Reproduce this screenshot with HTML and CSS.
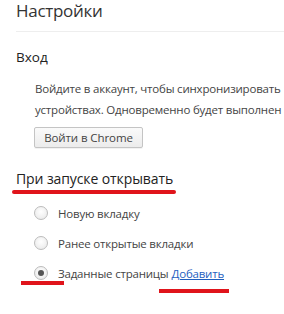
FILE: index.html
```html
<!DOCTYPE html>
<html lang="ru">
<head>
<meta charset="utf-8">
<link rel="stylesheet" href="styles.css">
</head>
<body>
<div class="page">
  <header class="header"><h1 class="title">Настройки</h1></header>
  <section class="section">
    <h3 class="sec-title">Вход</h3>
    <div class="sec-body">
      <p class="desc"><span class="line">Войдите в аккаунт, чтобы синхронизировать</span><span class="line">устройствах. Одновременно будет выполнен автоматический</span></p>
      <button class="btn">Войти в Chrome</button>
    </div>
  </section>
  <section class="section startup">
    <h3 class="sec-title"><span class="mark mark-title">При запуске открывать</span></h3>
    <div class="sec-body radios">
      <label class="radio-row"><span class="radio"></span>Новую вкладку</label>
      <label class="radio-row"><span class="radio"></span>Ранее открытые вкладки</label>
      <label class="radio-row"><span class="radio checked"><span class="mark mark-radio"></span></span>Заданные страницы <a class="link" href="#">Добавить<span class="mark mark-link"></span></a></label>
    </div>
  </section>
</div>
</body>
</html>
```
FILE: styles.css
```css
html, body { margin: 0; padding: 0; background: #fff; }
body { font-family: "Open Sans", "Noto Sans", sans-serif; color: #333; overflow: hidden; }
.page { width: 284px; height: 314px; overflow: hidden; }
.header { margin-left: 16px; border-bottom: 1px solid #eee; height: 31px; }
.title { margin: 0; font-weight: normal; font-size: 17px; line-height: 22px; color: #333; letter-spacing: -0.3px; }
.section { padding-left: 16px; }
.sec-title { margin: 0; font-weight: normal; font-size: 13.5px; line-height: 18px; color: #222; }
.section:first-of-type .sec-title { margin-top: 16px; }
.sec-body { padding-left: 19px; }
.desc { margin: 12px 0 0; font-size: 11.5px; line-height: 21px; color: #444; white-space: nowrap; letter-spacing: -0.2px; }
.line { display: block; }
.btn { display: block; margin-top: 7px; margin-left: -1px; height: 21px; width: 109px; padding: 0; font-family: inherit; font-size: 11.5px; letter-spacing: -0.1px; color: #444; background: linear-gradient(#fafafa, #ececec); border: 1px solid #c4c4c4; border-radius: 2px; box-shadow: 0 1px 0 rgba(0,0,0,0.05); }
.startup { margin-top: 22px; }
.startup .sec-title { font-size: 14px; letter-spacing: -0.1px; }
.mark { position: relative; }
.mark-title::after { content: ""; position: absolute; left: -4px; right: -3px; bottom: -6px; height: 4px; background: #e0141b; border-radius: 2px; }
.radios { margin-top: 10px; padding-left: 18px; }
.radio-row { display: flex; align-items: center; height: 30px; font-size: 11.5px; letter-spacing: -0.2px; color: #444; }
.radio { position: relative; box-sizing: border-box; width: 14px; height: 14px; border-radius: 50%; border: 1px solid #bcbcbc; background: radial-gradient(circle at 50% 40%, #fff, #e6e6e6); margin-right: 10px; flex: none; }
.radio.checked::before { content: ""; position: absolute; left: 3px; top: 3px; width: 6px; height: 6px; border-radius: 50%; background: #555; }
.mark-radio { position: absolute; left: -14px; top: 14px; width: 43px; height: 4px; background: #e0141b; }
.link { position: relative; color: #1f5fbf; text-decoration: underline; margin-left: 3px; }
.mark-link { position: absolute; left: -13px; top: 23px; width: 70px; height: 4px; background: #e0141b; }
```
